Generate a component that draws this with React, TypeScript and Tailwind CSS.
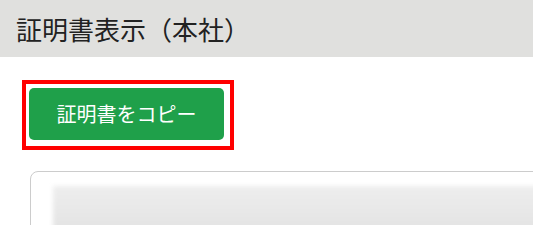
export default function App() {
  return (
    <div className="w-[533px] h-[225px] overflow-hidden bg-white font-['Noto_Sans_CJK_JP','Noto_Sans',sans-serif] text-[#222]">
      <div className="h-[57px] bg-[#e0e0de] flex items-center pl-4">
        <h1 className="text-[26px] leading-none font-normal tracking-[0px]">証明書表示（本社）</h1>
      </div>

      <div className="pl-[22px] pt-[23px]">
        <div className="inline-block border-4 border-[#ff0000] pt-[4px] pl-[3px] pr-[6px] pb-[6px]">
          <button className="w-[195px] h-[52px] rounded-[5px] bg-[#1fa04a] text-white text-[20px] leading-none flex items-center justify-center">
            証明書をコピー
          </button>
        </div>
      </div>

      <div className="ml-[30px] mt-[21px] w-[600px] h-[80px] border border-[#cccccc] rounded-lg pt-[14px] pl-[22px]">
        <div className="h-[60px] bg-gradient-to-b from-[#eeeeee] to-[#e0e0e0] blur-[2px]" />
      </div>
    </div>
  );
}
